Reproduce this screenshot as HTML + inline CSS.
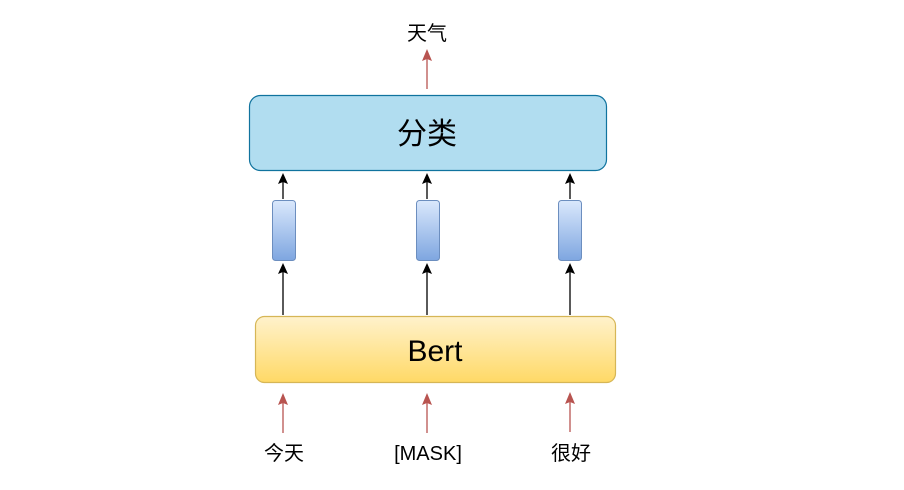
<!DOCTYPE html>
<html><head><meta charset="utf-8"><style>html,body{margin:0;padding:0;background:#fff}svg{display:block}text{font-family:"Liberation Sans","Noto Sans CJK SC",sans-serif;fill:#000}</style></head><body>
<svg width="904" height="490" viewBox="0 0 904 490" xmlns="http://www.w3.org/2000/svg">
<defs>
<linearGradient id="b" x1="0" y1="0" x2="0" y2="1"><stop offset="0" stop-color="#dae8fc"/><stop offset="1" stop-color="#7ea6e0"/></linearGradient>
<linearGradient id="y" x1="0" y1="0" x2="0" y2="1"><stop offset="0" stop-color="#fff2cc"/><stop offset="1" stop-color="#ffd966"/></linearGradient>
</defs>
<text x="427" y="40" font-size="20" text-anchor="middle">天气</text>
<line x1="427" y1="89" x2="427" y2="57" stroke="#b85450" stroke-width="1.3"/>
<path d="M422,61 L427,49 L432,61 L427,59 Z" fill="#b85450"/>
<rect x="249.5" y="95.5" width="357" height="75" rx="11" fill="#b1ddf0" stroke="#10739e" stroke-width="1.2"/>
<text x="427" y="144" font-size="30" text-anchor="middle">分类</text>
<g stroke="#000" stroke-width="1.3">
<line x1="283" y1="199" x2="283" y2="180"/><line x1="427" y1="199" x2="427" y2="180"/><line x1="570" y1="199" x2="570" y2="180"/>
<line x1="283" y1="315" x2="283" y2="270"/><line x1="427" y1="315" x2="427" y2="270"/><line x1="570" y1="315" x2="570" y2="270"/>
</g>
<g fill="#000">
<path d="M278,184 L283,173 L288,184 L283,182 Z"/><path d="M422,184 L427,173 L432,184 L427,182 Z"/><path d="M565,184 L570,173 L575,184 L570,182 Z"/>
<path d="M278,274 L283,263 L288,274 L283,272 Z"/><path d="M422,274 L427,263 L432,274 L427,272 Z"/><path d="M565,274 L570,263 L575,274 L570,272 Z"/>
</g>
<g fill="url(#b)" stroke="#6c8ebf">
<rect x="272.5" y="200.5" width="23" height="60" rx="3"/>
<rect x="416.5" y="200.5" width="23" height="60" rx="3"/>
<rect x="558.5" y="200.5" width="23" height="60" rx="3"/>
</g>
<rect x="255.5" y="316.5" width="360" height="66" rx="9" fill="url(#y)" stroke="#d6b656" stroke-width="1.2"/>
<text x="435" y="361" font-size="30" text-anchor="middle">Bert</text>
<g stroke="#b85450" stroke-width="1.3">
<line x1="283" y1="433" x2="283" y2="401"/><line x1="427" y1="433" x2="427" y2="401"/><line x1="570" y1="432" x2="570" y2="400"/>
</g>
<g fill="#b85450">
<path d="M278,405 L283,393 L288,405 L283,403 Z"/><path d="M422,405 L427,393 L432,405 L427,403 Z"/><path d="M565,404 L570,392 L575,404 L570,402 Z"/>
</g>
<text x="284" y="460" font-size="20" text-anchor="middle">今天</text>
<text x="428" y="460" font-size="20" text-anchor="middle">[MASK]</text>
<text x="571" y="460" font-size="20" text-anchor="middle">很好</text>
</svg>
</body></html>
